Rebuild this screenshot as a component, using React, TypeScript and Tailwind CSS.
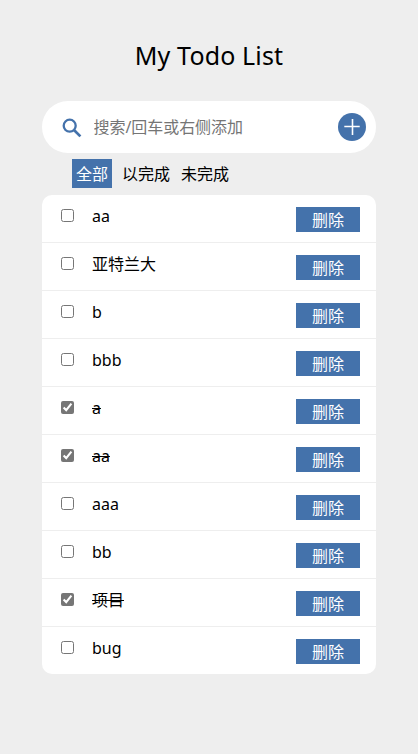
import { useState } from "react";

type Todo = { id: number; text: string; done: boolean };

const initialTodos: Todo[] = [
  { id: 1, text: "aa", done: false },
  { id: 2, text: "亚特兰大", done: false },
  { id: 3, text: "b", done: false },
  { id: 4, text: "bbb", done: false },
  { id: 5, text: "a", done: true },
  { id: 6, text: "aa", done: true },
  { id: 7, text: "aaa", done: false },
  { id: 8, text: "bb", done: false },
  { id: 9, text: "项目", done: true },
  { id: 10, text: "bug", done: false },
];

const tabs = ["全部", "以完成", "未完成"];

function SearchIcon() {
  return (
    <svg className="ml-5 mt-0.5 size-5 shrink-0" viewBox="0 0 20 20" fill="none" stroke="#4472ab">
      <circle cx="7.7" cy="7.7" r="6" strokeWidth="2.3" />
      <path d="M12 12L18.4 18.4" strokeWidth="2.7" />
    </svg>
  );
}

export default function App() {
  const [todos, setTodos] = useState(initialTodos);
  const [tab, setTab] = useState(0);
  const [query, setQuery] = useState("");

  const add = () => {
    if (!query.trim()) return;
    setTodos([...todos, { id: Date.now(), text: query.trim(), done: false }]);
    setQuery("");
  };
  const shown = todos.filter((t) => tab === 0 || (tab === 1 ? t.done : !t.done));

  return (
    <div className="min-h-screen bg-[#eeeeee] px-[42px] pt-[35px] font-['Noto_Sans','Noto_Sans_CJK_SC',sans-serif] text-base text-black">
      <h1 className="h-[66px] whitespace-nowrap text-center text-[25px] leading-10 tracking-[0.15px]">My Todo List</h1>
      <div className="flex h-[52px] items-center rounded-full bg-white pr-2.5">
        <SearchIcon />
        <input
          className="-mt-px ml-[11.5px] h-6 min-w-0 flex-1 bg-transparent text-base leading-6 tracking-[-0.05px] outline-none placeholder:text-[#757575]"
          placeholder="搜索/回车或右侧添加"
          value={query}
          onChange={(e) => setQuery(e.target.value)}
          onKeyDown={(e) => e.key === "Enter" && add()}
        />
        <button onClick={add} className="flex size-7 items-center justify-center rounded-full bg-[#4472ab]">
          <svg className="size-4" viewBox="0 0 16 16" stroke="white" strokeWidth="1.6">
            <path d="M.3 7.5H15.7M8.5 0V16" />
          </svg>
        </button>
      </div>
      <div className="ml-[30px] mt-1.5 flex h-[29px] gap-[3px]">
        {tabs.map((label, i) => (
          <button
            key={label}
            onClick={() => setTab(i)}
            className={`px-1 pt-px leading-7 ${i === tab ? "mr-[3px] bg-[#4472ab] text-white" : ""}`}
          >
            {label}
          </button>
        ))}
      </div>
      <ul className="mt-[7px] overflow-hidden rounded-[10px] bg-white">
        {shown.map((t) => (
          <li key={t.id} className="flex h-12 items-start border-b border-[#eeeeee] pl-[19px] pr-4 last:h-[47px] last:border-b-0">
            <input
              type="checkbox"
              checked={t.done}
              onChange={() => setTodos(todos.map((x) => (x.id === t.id ? { ...x, done: !x.done } : x)))}
              className="mt-3.5 size-[13px] accent-[#767676]"
            />
            <span className={`ml-[18px] mt-[9px] flex-1 leading-6 ${t.done ? "line-through" : ""}`}>{t.text}</span>
            <button
              onClick={() => setTodos(todos.filter((x) => x.id !== t.id))}
              className="mt-3 h-[25px] w-16 bg-[#4472ab] pt-0.5 leading-[23px] text-white"
            >
              删除
            </button>
          </li>
        ))}
      </ul>
    </div>
  );
}
